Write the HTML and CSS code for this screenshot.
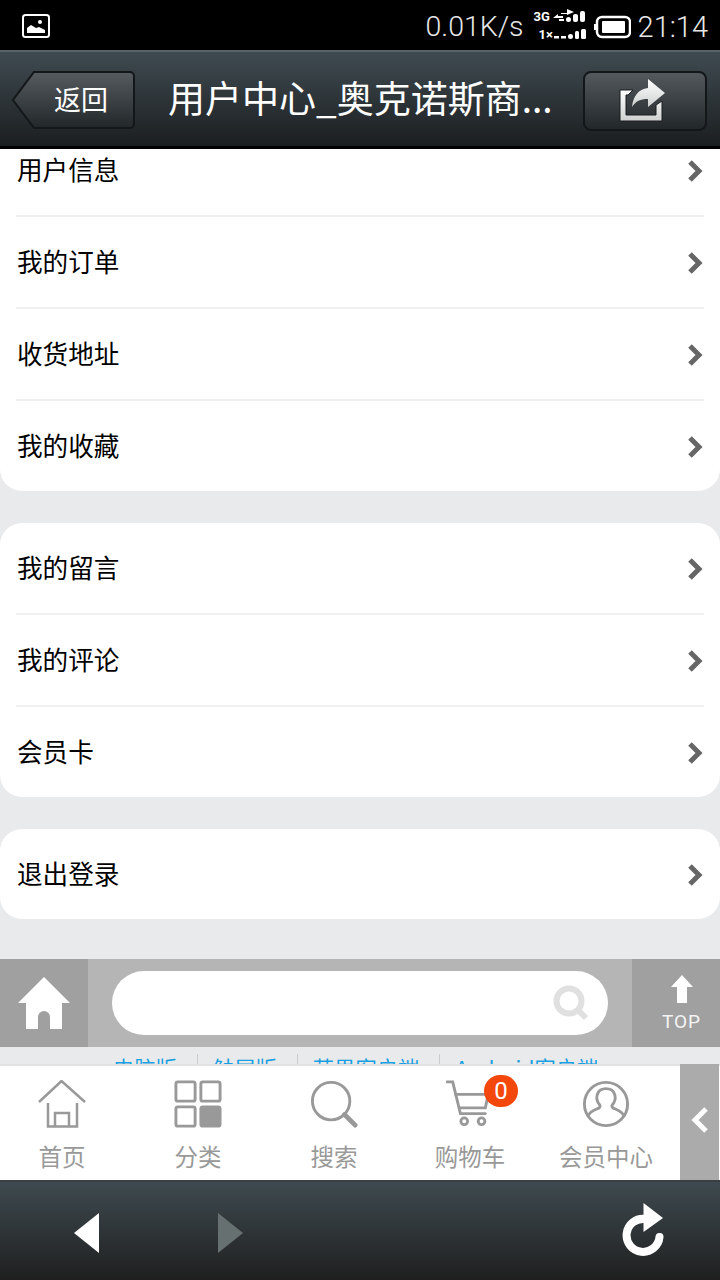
FILE: index.html
```html
<!DOCTYPE html>
<html lang="zh-CN">
<head>
<meta charset="utf-8">
<title>用户中心</title>
<link rel="stylesheet" href="styles.css">
</head>
<body>
<div class="app">
  <div class="status">
    <svg class="st-pic" width="28" height="24" viewBox="0 0 28 24"><rect x="1" y="1" width="26" height="22" rx="2.5" fill="none" stroke="#fff" stroke-width="2"/><path d="M5 19v-5l4-3 5 3 3-1 6 3v3z" fill="#fff"/><circle cx="18" cy="8" r="2" fill="#fff"/></svg>
    <span class="st-speed">0.01K/s</span>
    <div class="st-signal">
      <div class="sig-row"><span class="sig-label">3G</span><svg width="34" height="14" viewBox="0 0 34 14"><path d="M0 9l5-4v2h5v2zM8 4h6V0l7 3-7 3v-1H8z" fill="#fff"/><rect x="6" y="10" width="5" height="2" fill="#fff"/><rect x="13" y="8" width="5" height="5" rx="2.5" fill="#fff"/><rect x="20" y="5" width="5" height="8" rx="2" fill="#fff"/><rect x="27" y="2" width="5" height="11" rx="2" fill="#fff"/></svg></div>
      <div class="sig-row sig-low"><span class="sig-label">1×</span><svg width="34" height="12" viewBox="0 0 34 12"><rect x="1" y="8" width="5" height="2.5" fill="#fff"/><rect x="8" y="8" width="5" height="2.5" fill="#fff"/><rect x="15" y="6" width="5" height="5" rx="2.5" fill="#fff"/><rect x="22" y="3" width="4" height="8" rx="1.5" fill="#fff"/><rect x="28" y="1" width="5" height="10" rx="1.5" fill="#fff"/></svg></div>
    </div>
    <svg class="st-batt" width="38" height="24" viewBox="0 0 38 24"><path d="M1 9h2v6H1z" fill="#fff"/><rect x="4" y="2" width="33" height="20" rx="5" fill="none" stroke="#fff" stroke-width="2.5"/><rect x="9" y="6" width="23" height="12" rx="1" fill="#fff"/></svg>
    <span class="st-time">21:14</span>
  </div>

  <header class="topbar">
    <button class="btn-back">
      <svg class="btn-back-bg" width="126" height="62" viewBox="0 0 126 62"><defs><linearGradient id="gb" x1="0" y1="0" x2="0" y2="1"><stop offset="0" stop-color="#565b5f"/><stop offset="1" stop-color="#22272a"/></linearGradient></defs><path d="M23 2H119a4 4 0 0 1 4 4V54a4 4 0 0 1-4 4H23L2 30z" fill="url(#gb)" stroke="#141719" stroke-width="2"/></svg>
      <span class="btn-back-label">返回</span>
    </button>
    <h1 class="title">用户中心_奥克诺斯商...</h1>
    <button class="btn-share">
      <svg width="50" height="46" viewBox="0 0 50 46"><defs><linearGradient id="gs" x1="0" y1="0" x2="0" y2="1"><stop offset="0" stop-color="#fff"/><stop offset="1" stop-color="#cfd1d1"/></linearGradient></defs><path d="M3 12h13l-5 5H9v20h30V27l6-4v20H3z" fill="url(#gs)" stroke="#1a1d1f" stroke-width="1"/><path d="M31 1l17 14-17 14v-8c-8 0-12 2-16 8 1-10 6-18 16-19z" fill="url(#gs)"/></svg>
    </button>
  </header>

  <main class="viewport">
    <div class="page">
      <section class="card card-first">
        <a class="row"><span>用户信息</span><svg class="chev" width="16" height="24" viewBox="0 0 16 24"><path d="M3 3l9 9-9 9" fill="none" stroke="#666" stroke-width="5"/></svg></a>
        <a class="row"><span>我的订单</span><svg class="chev" width="16" height="24" viewBox="0 0 16 24"><path d="M3 3l9 9-9 9" fill="none" stroke="#666" stroke-width="5"/></svg></a>
        <a class="row"><span>收货地址</span><svg class="chev" width="16" height="24" viewBox="0 0 16 24"><path d="M3 3l9 9-9 9" fill="none" stroke="#666" stroke-width="5"/></svg></a>
        <a class="row"><span>我的收藏</span><svg class="chev" width="16" height="24" viewBox="0 0 16 24"><path d="M3 3l9 9-9 9" fill="none" stroke="#666" stroke-width="5"/></svg></a>
      </section>
      <section class="card">
        <a class="row"><span>我的留言</span><svg class="chev" width="16" height="24" viewBox="0 0 16 24"><path d="M3 3l9 9-9 9" fill="none" stroke="#666" stroke-width="5"/></svg></a>
        <a class="row"><span>我的评论</span><svg class="chev" width="16" height="24" viewBox="0 0 16 24"><path d="M3 3l9 9-9 9" fill="none" stroke="#666" stroke-width="5"/></svg></a>
        <a class="row"><span>会员卡</span><svg class="chev" width="16" height="24" viewBox="0 0 16 24"><path d="M3 3l9 9-9 9" fill="none" stroke="#666" stroke-width="5"/></svg></a>
      </section>
      <section class="card">
        <a class="row"><span>退出登录</span><svg class="chev" width="16" height="24" viewBox="0 0 16 24"><path d="M3 3l9 9-9 9" fill="none" stroke="#666" stroke-width="5"/></svg></a>
      </section>

      <div class="searchbar">
        <div class="sb-home"><svg width="52" height="52" viewBox="0 0 52 52"><path d="M26 0L52 26H44V52H32V40a6 6 0 0 0-12 0V52H8V26H0z" fill="#fff"/></svg></div>
        <div class="sb-mid">
          <div class="sb-input"><svg width="36" height="36" viewBox="0 0 36 36"><circle cx="16" cy="16" r="12.5" fill="none" stroke="#e0e0e0" stroke-width="6"/><path d="M25 25l8 8" stroke="#e0e0e0" stroke-width="6"/></svg></div>
        </div>
        <div class="sb-top"><svg width="22" height="28" viewBox="0 0 22 28"><path d="M11 0L22 12H16V28H6V12H0z" fill="#fff"/></svg><span>TOP</span></div>
      </div>
      <nav class="links"><a>电脑版</a><a>触屏版</a><a>苹果客户端</a><a>Android客户端</a></nav>
    </div>
  </main>

  <nav class="tabbar">
    <div class="tabs">
      <a class="tab"><svg width="48" height="48" viewBox="0 0 48 48"><g fill="none" stroke="#999" stroke-width="2.5"><path d="M1 22L23.5 1 47 22"/><path d="M10 23V46.5H39V23"/><path d="M17 46V33H31V46"/></g></svg><span>首页</span></a>
      <a class="tab"><svg width="48" height="48" viewBox="0 0 50 50"><g fill="none" stroke="#999" stroke-width="3"><rect x="2" y="2" width="20" height="20" rx="2"/><rect x="28" y="2" width="20" height="20" rx="2"/><rect x="2" y="28" width="20" height="20" rx="2"/><rect x="28" y="28" width="20" height="20" rx="2" fill="#999"/></g></svg><span>分类</span></a>
      <a class="tab"><svg width="48" height="48" viewBox="0 0 50 50"><circle cx="22" cy="22" r="19.5" fill="none" stroke="#999" stroke-width="3"/><path d="M36 36l11 11" stroke="#999" stroke-width="5" stroke-linecap="round"/></svg><span>搜索</span></a>
      <a class="tab"><svg width="48" height="48" viewBox="0 0 50 50"><g fill="none" stroke="#999" stroke-width="3" stroke-linecap="round"><path d="M1 2h6l8 33h26"/><path d="M10 15h34l-3 14H14"/><circle cx="19" cy="43" r="3.5"/><circle cx="37" cy="43" r="3.5"/></g></svg><span>购物车</span><b class="badge">0</b></a>
      <a class="tab"><svg width="48" height="48" viewBox="0 0 50 50"><g fill="none" stroke="#999" stroke-width="3"><circle cx="25" cy="25" r="22.5"/><path d="M6 38c2-6 8-7 12-9 1-1 1-3-1-5-3-5-2-15 8-15s11 10 8 15c-2 2-2 4-1 5 4 2 10 3 12 9"/></g></svg><span>会员中心</span></a>
    </div>
    <div class="tab-toggle"><svg width="20" height="28" viewBox="0 0 20 28"><path d="M16 3L5 14l11 11" fill="none" stroke="#fff" stroke-width="5"/></svg></div>
  </nav>

  <footer class="browserbar">
    <svg class="nav-back" width="26" height="40" viewBox="0 0 26 40"><path d="M25 0V40L0 20z" fill="#fff"/></svg>
    <svg class="nav-fwd" width="26" height="40" viewBox="0 0 26 40"><path d="M1 0V40L26 20z" fill="#667070"/></svg>
    <svg class="nav-reload" width="44" height="54" viewBox="0 0 44 54"><path d="M21.5 0L41 15 21.5 29z" fill="#fff"/><path d="M23 16A16.5 16.5 0 1 0 37.5 34" fill="none" stroke="#fff" stroke-width="8" stroke-linecap="round"/></svg>
  </footer>
</div>
</body>
</html>
```
FILE: styles.css
```css
* { box-sizing: border-box; }
html, body { margin: 0; padding: 0; }
body { font-family: "Noto Sans CJK SC", "Roboto", sans-serif; background: #e9eaec; }
a { color: inherit; text-decoration: none; }
button { padding: 0; border: 0; background: none; cursor: pointer; }

.app { width: 720px; height: 1280px; display: flex; flex-direction: column; overflow: hidden; }

.status { height: 50px; flex: none; background: #000; display: flex; align-items: center; padding: 0 12px 0 22px; color: #e8e8e8; }
.st-pic { flex: none; margin-top: 1px; }
.st-speed { margin-left: auto; margin-top: 5px; font: 300 28.5px/1 "Roboto", sans-serif; }
.st-signal { width: 53px; margin-left: 10px; display: flex; flex-direction: column; gap: 4px; }
.sig-row { display: flex; align-items: center; height: 14px; color: #fff; }
.sig-low { padding-left: 5px; }
.sig-label { font: 700 13px/1 "Roboto", sans-serif; width: 19px; flex: none; }
.sig-low .sig-label { width: 15px; }
.sig-low svg { margin-left: -1px; }
.st-batt { flex: none; margin-left: 6px; margin-top: 4px; }
.st-time { font: 300 29px/1 "Roboto", sans-serif; margin-left: 7px; margin-top: 5px; }

.topbar { height: 99px; flex: none; display: flex; align-items: center; padding: 3px 13px 0 11px; background: linear-gradient(#3f4b51, #1b1e20); border-top: 2px solid #5a6468; border-bottom: 3px solid #000; }
.btn-back { position: relative; width: 126px; height: 62px; flex: none; }
.btn-back-bg { display: block; }
.btn-back-label { position: absolute; left: 43px; top: 13px; font-size: 27px; line-height: 36px; color: #fff; }
.title { flex: 1; margin: 0 0 8px; padding-left: 31px; font-size: 37px; line-height: 50px; font-weight: 400; color: #fff; white-space: nowrap; }
.btn-share { width: 124px; height: 60px; flex: none; display: flex; align-items: center; justify-content: center; padding-right: 7px; border: 2px solid #141719; border-radius: 8px; background: linear-gradient(#54595d, #22272a); }

.viewport { flex: 1; min-height: 0; overflow: hidden; }
.page { margin-top: -24px; display: flex; flex-direction: column; gap: 32px; }
.card { background: #fff; border-radius: 22px; padding: 0 16px; }
.card-first { border-radius: 0 0 22px 22px; }
.row { height: 92px; display: flex; align-items: center; justify-content: space-between; padding: 0 1px; font-size: 25.6px; color: #000; border-bottom: 2px solid #f0f0f0; }
.row:last-child { border-bottom: 0; height: 90px; }
.row span { margin-bottom: 4px; }
.chev { flex: none; margin-top: 2px; }

.searchbar { height: 88px; margin-top: 8px; display: flex; background: #b5b5b5; }
.sb-home { width: 88px; flex: none; background: #a0a0a0; display: flex; align-items: center; justify-content: center; }
.sb-mid { flex: 1; padding: 12px 24px; }
.sb-input { height: 64px; background: #fff; border-radius: 32px; display: flex; align-items: center; justify-content: flex-end; padding-right: 19px; }
.sb-top { width: 88px; flex: none; background: #a0a0a0; display: flex; flex-direction: column; align-items: center; padding: 16px 0 0 11px; color: #f4f4f4; }
.sb-top span { font: 400 19px/20px "Roboto", sans-serif; letter-spacing: 1px; margin-top: 9px; }

.links { margin-top: -32px; height: 60px; padding-top: 7px; display: flex; justify-content: flex-start; padding-left: 113px; font-size: 21.3px; line-height: 28px; color: #1a9fe0; white-space: nowrap; }
.links a { padding: 0 20px 0 15px; border-left: 1px solid #ccc; height: 28px; }
.links a:first-child { border-left: 0; padding-left: 0; }

.tabbar { height: 116px; flex: none; position: relative; display: flex; background: #fff; border-top: 2px solid #e2e2e2; }
.tabs { width: 680px; display: flex; transform: translateX(-6px); }
.tab { position: relative; width: 136px; flex: none; display: flex; flex-direction: column; align-items: center; padding-top: 14px; font-size: 23.5px; line-height: 32px; color: #999; }
.tab span { margin-top: 12px; white-space: nowrap; }
.badge { position: absolute; left: 82px; top: 9px; width: 34px; height: 32px; border-radius: 17px; background: #f4470c; color: #fff; font: 400 24px/32px "Roboto", sans-serif; text-align: center; }
.tab-toggle { width: 39px; flex: none; background: #ababab; margin-top: -2px; display: flex; align-items: center; justify-content: center; padding-bottom: 4px; }

.browserbar { height: 100px; flex: none; display: flex; align-items: center; padding: 4px 54px 0 74px; background: linear-gradient(#3e4a50, #1f1f1f); border-top: 2px solid #3a3f42; }
.nav-fwd { margin-left: 117px; }
.nav-reload { margin-left: auto; margin-top: -6px; }
```
